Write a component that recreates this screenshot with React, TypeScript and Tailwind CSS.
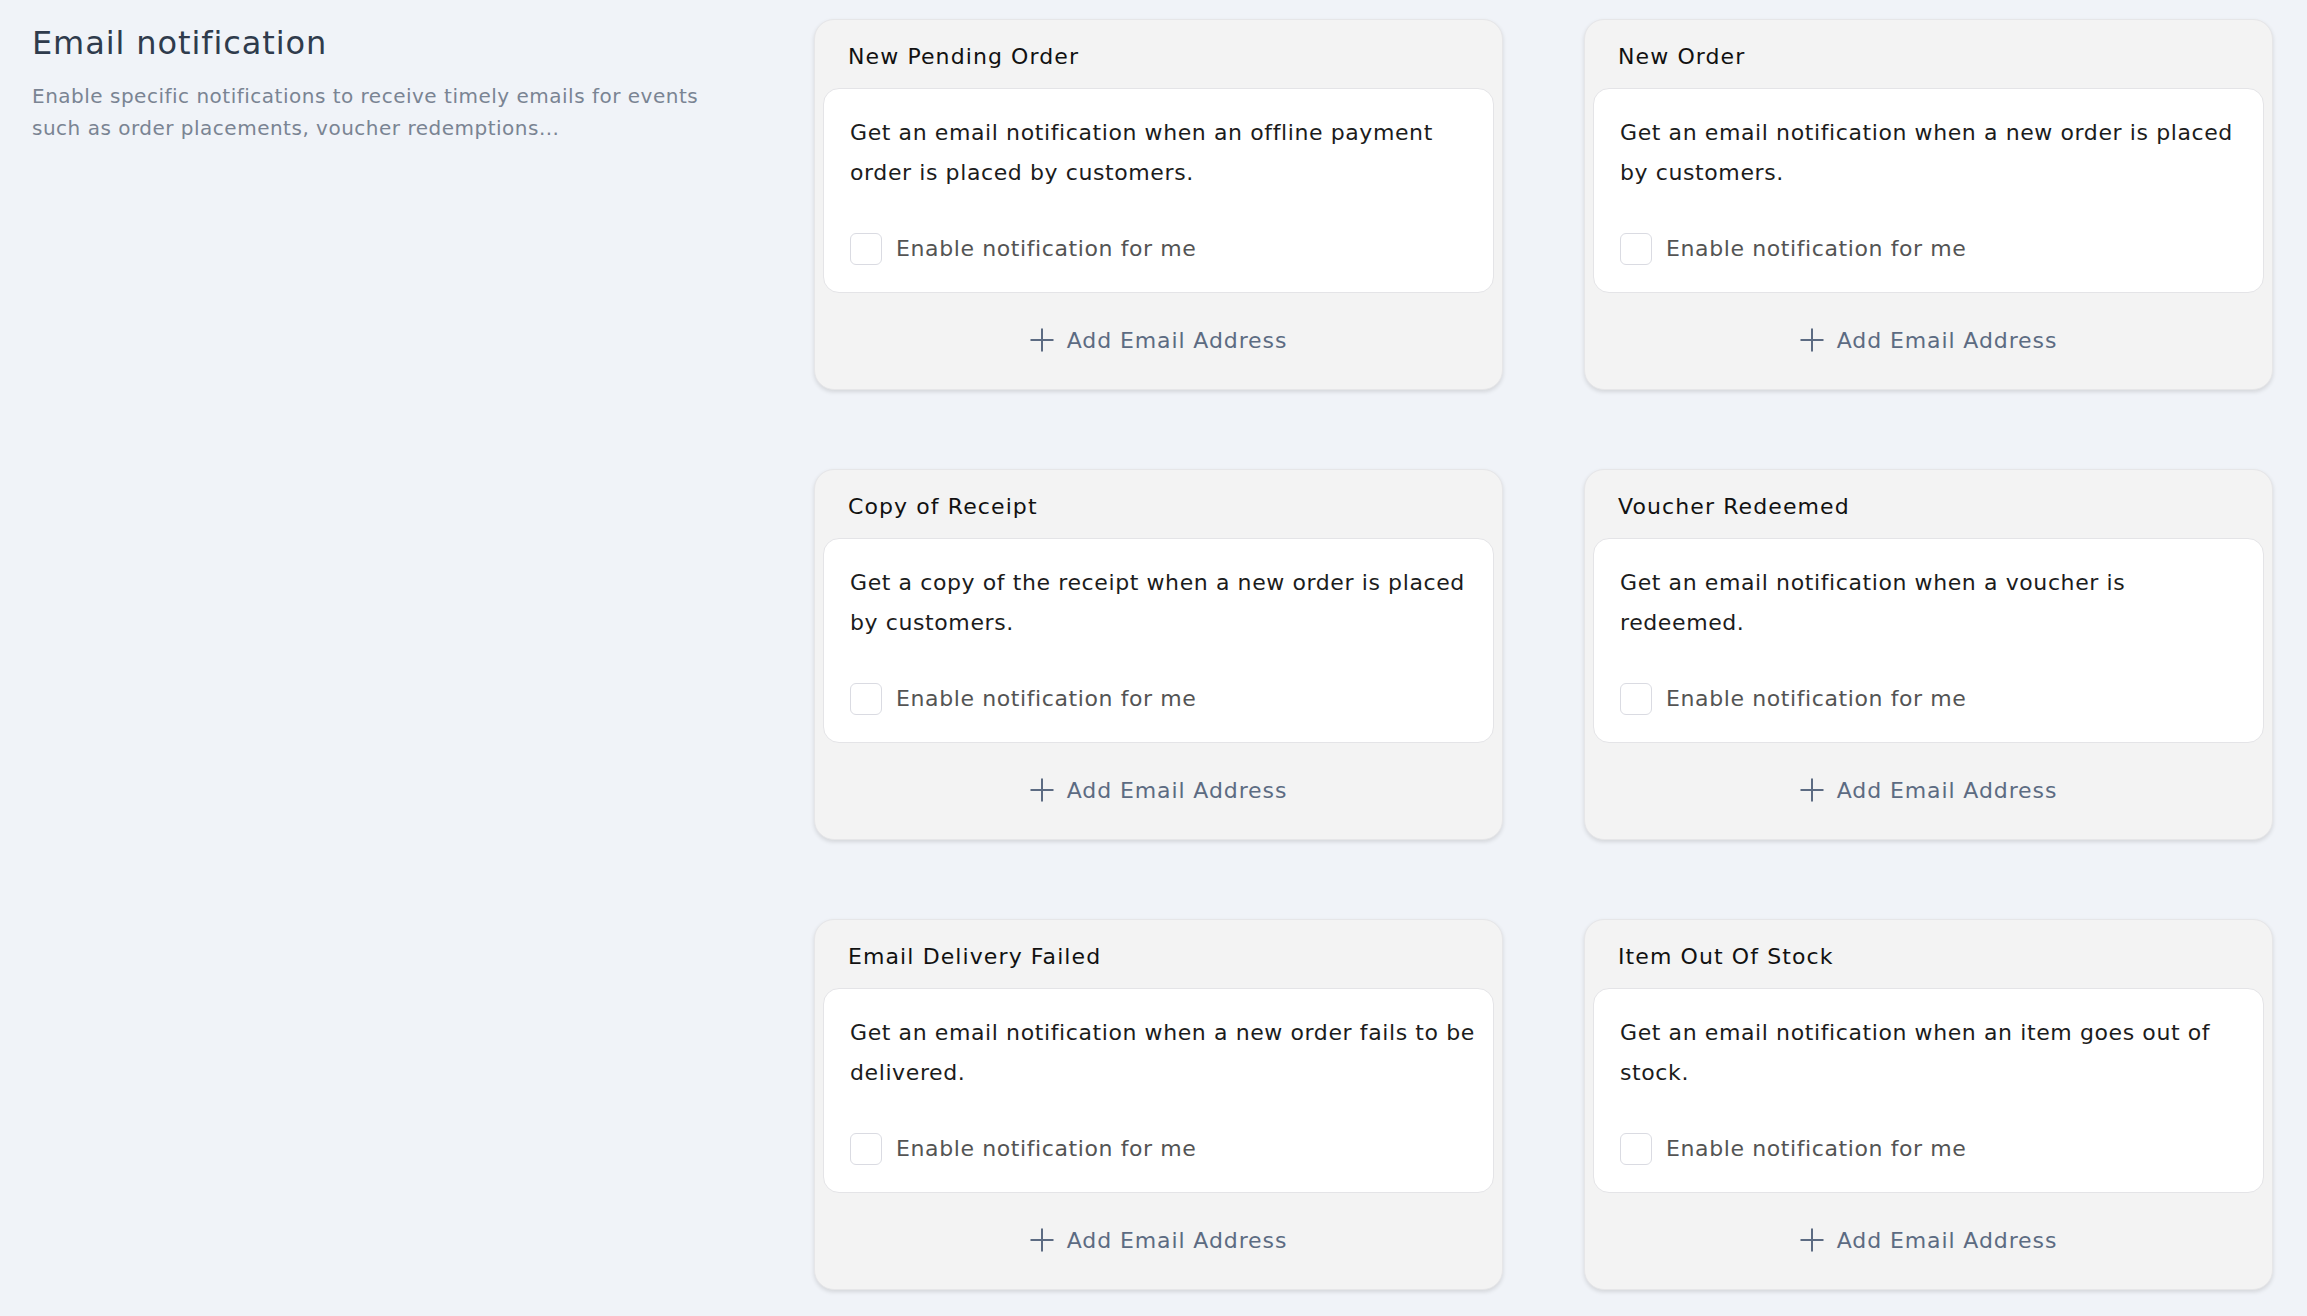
type Notice = {
  title: string;
  description: string;
};

const notices: Notice[] = [
  {
    title: "New Pending Order",
    description: "Get an email notification when an offline payment order is placed by customers.",
  },
  {
    title: "New Order",
    description: "Get an email notification when a new order is placed by customers.",
  },
  {
    title: "Copy of Receipt",
    description: "Get a copy of the receipt when a new order is placed by customers.",
  },
  {
    title: "Voucher Redeemed",
    description: "Get an email notification when a voucher is redeemed.",
  },
  {
    title: "Email Delivery Failed",
    description: "Get an email notification when a new order fails to be delivered.",
  },
  {
    title: "Item Out Of Stock",
    description: "Get an email notification when an item goes out of stock.",
  },
];

function PlusIcon() {
  return (
    <svg width="24" height="24" viewBox="0 0 24 24" fill="none" stroke="currentColor" strokeWidth="2">
      <path d="M12 0.5v23M0.5 12h23" />
    </svg>
  );
}

function NoticeCard({ notice }: { notice: Notice }) {
  return (
    <div className="flex h-[371px] flex-col rounded-[20px] border border-[#e6e6e8] bg-[#f3f3f3] px-2 shadow-[0_2px_4px_rgba(0,0,0,0.12)]">
      <h3 className="flex h-[68px] items-center px-[25px] pt-[4px] text-[22px] tracking-[1.1px] text-[#111]">
        {notice.title}
      </h3>
      <div className="rounded-2xl border border-[#e4e4e7] bg-white pt-[24px] pr-[16px] pb-[27px] pl-[26px]">
        <p className="min-h-[80px] text-[22px] leading-[40px] tracking-[0.6px] text-[#1c1c1c]">
          {notice.description}
        </p>
        <label className="mt-[39px] flex items-center gap-[14px]">
          <span className="h-8 w-8 rounded-md border border-[#dadbe2] bg-white" />
          <span className="text-[22px] tracking-[0.6px] text-[#545454]">Enable notification for me</span>
        </label>
      </div>
      <button className="flex flex-1 items-center justify-center gap-[13px] pb-[2px] text-[22px] tracking-[0.9px] text-[#5c6b82]">
        <PlusIcon />
        Add Email Address
      </button>
    </div>
  );
}

export default function App() {
  return (
    <div className="min-h-screen bg-[#f0f3f8] font-['DejaVu_Sans',sans-serif]">
      <div className="flex">
        <div className="w-[814px] shrink-0 pl-8 pt-[21px]">
          <h1 className="text-[32px] leading-[44px] tracking-[0.9px] text-[#2f3b4c]">Email notification</h1>
          <p className="mt-[15px] w-[700px] text-[20px] leading-[32px] tracking-[0.5px] text-[#7a8493]">
            Enable specific notifications to receive timely emails for events such as order
            placements, voucher redemptions...
          </p>
        </div>
        <div className="grid w-[1459px] grid-cols-2 gap-x-[81px] gap-y-[79px] pt-[19px] pb-[29px]">
          {notices.map((n) => (
            <NoticeCard key={n.title} notice={n} />
          ))}
        </div>
      </div>
    </div>
  );
}
